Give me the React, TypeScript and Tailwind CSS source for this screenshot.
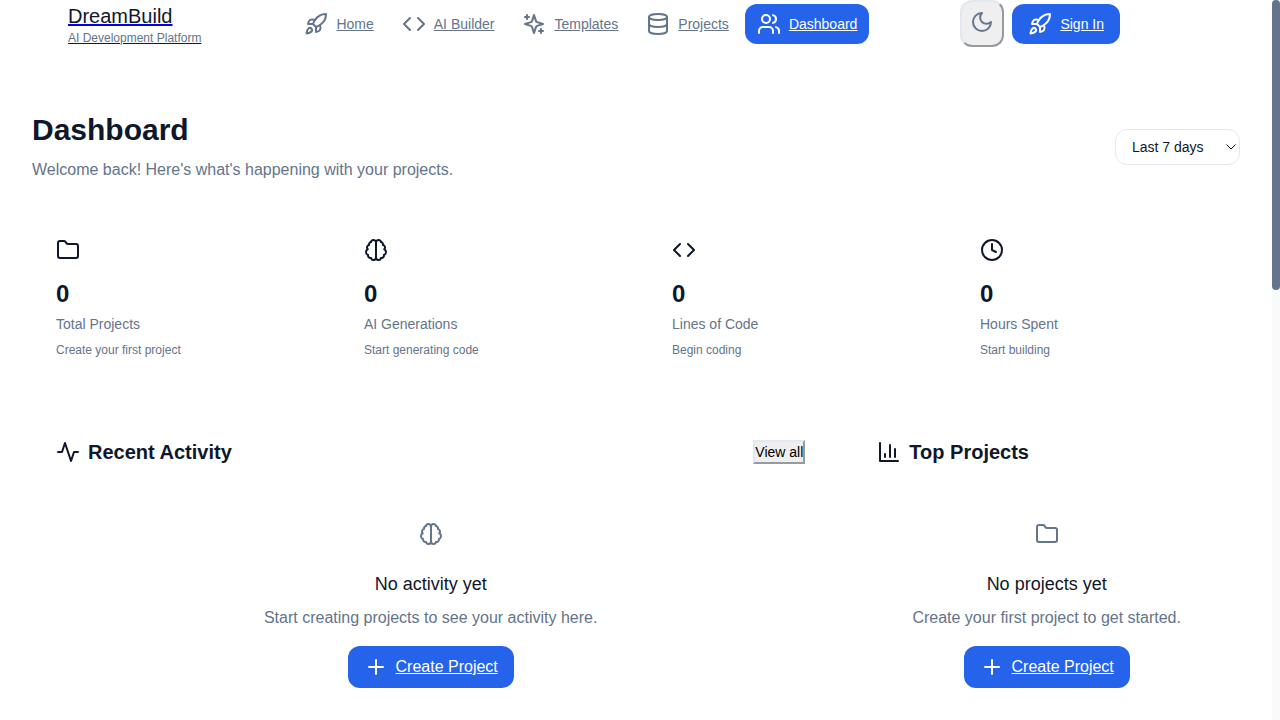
import type { ReactNode } from "react";

function Icon({ children, className = "" }: { children: ReactNode; className?: string }) {
  return (
    <svg
      aria-hidden="true"
      viewBox="0 0 24 24"
      fill="none"
      stroke="currentColor"
      strokeWidth="2"
      strokeLinecap="round"
      strokeLinejoin="round"
      className={`size-6 shrink-0 ${className}`}
    >
      {children}
    </svg>
  );
}

const rocket = (
  <>
    <path d="M4.5 16.5c-1.5 1.26-2 5-2 5s3.74-.5 5-2c.71-.84.7-2.13-.09-2.91a2.18 2.18 0 0 0-2.91-.09z" />
    <path d="m12 15-3-3a22 22 0 0 1 2-3.95A12.88 12.88 0 0 1 22 2c0 2.72-.78 7.5-6 11a22.35 22.35 0 0 1-4 2z" />
    <path d="M9 12H4s.55-3.03 2-4c1.62-1.08 5 0 5 0" />
    <path d="M12 15v5s3.03-.55 4-2c1.08-1.62 0-5 0-5" />
  </>
);

const code = (
  <>
    <polyline points="16 18 22 12 16 6" />
    <polyline points="8 6 2 12 8 18" />
  </>
);

const sparkles = (
  <>
    <path d="m12 3-1.912 5.813a2 2 0 0 1-1.275 1.275L3 12l5.813 1.912a2 2 0 0 1 1.275 1.275L12 21l1.912-5.813a2 2 0 0 1 1.275-1.275L21 12l-5.813-1.912a2 2 0 0 1-1.275-1.275L12 3Z" />
    <path d="M5 3v4" />
    <path d="M19 17v4" />
    <path d="M3 5h4" />
    <path d="M17 19h4" />
  </>
);

const database = (
  <>
    <ellipse cx="12" cy="5" rx="9" ry="3" />
    <path d="M3 5v14a9 3 0 0 0 18 0V5" />
    <path d="M3 12a9 3 0 0 0 18 0" />
  </>
);

const users = (
  <>
    <path d="M16 21v-2a4 4 0 0 0-4-4H6a4 4 0 0 0-4 4v2" />
    <circle cx="9" cy="7" r="4" />
    <path d="M22 21v-2a4 4 0 0 0-3-3.87" />
    <path d="M16 3.13a4 4 0 0 1 0 7.75" />
  </>
);

const moon = <path d="M12 3a6 6 0 0 0 9 9 9 9 0 1 1-9-9Z" />;

const folder = (
  <path d="M4 20h16a2 2 0 0 0 2-2V8a2 2 0 0 0-2-2h-7.93a2 2 0 0 1-1.66-.9l-.82-1.2A2 2 0 0 0 7.93 3H4a2 2 0 0 0-2 2v13c0 1.1.9 2 2 2Z" />
);

const brain = (
  <>
    <path d="M9.5 2A2.5 2.5 0 0 1 12 4.5v15a2.5 2.5 0 0 1-4.96.44 2.5 2.5 0 0 1-2.96-3.08 3 3 0 0 1-.34-5.58 2.5 2.5 0 0 1 1.32-4.24 2.5 2.5 0 0 1 1.98-3A2.5 2.5 0 0 1 9.5 2Z" />
    <path d="M14.5 2A2.5 2.5 0 0 0 12 4.5v15a2.5 2.5 0 0 0 4.96.44 2.5 2.5 0 0 0 2.96-3.08 3 3 0 0 0 .34-5.58 2.5 2.5 0 0 0-1.32-4.24 2.5 2.5 0 0 0-1.98-3A2.5 2.5 0 0 0 14.5 2Z" />
  </>
);

const clock = (
  <>
    <circle cx="12" cy="12" r="10" />
    <polyline points="12 6 12 12 16 14" />
  </>
);

const activity = <path d="M22 12h-4l-3 9L9 3l-3 9H2" />;

const barChart = (
  <>
    <path d="M3 3v18h18" />
    <path d="M18 17V9" />
    <path d="M13 17V5" />
    <path d="M8 17v-3" />
  </>
);

const plus = (
  <>
    <path d="M5 12h14" />
    <path d="M12 5v14" />
  </>
);

const navItems = [
  { label: "Home", icon: rocket },
  { label: "AI Builder", icon: code },
  { label: "Templates", icon: sparkles },
  { label: "Projects", icon: database },
  { label: "Dashboard", icon: users, active: true },
];

const stats = [
  { label: "Total Projects", hint: "Create your first project", icon: folder },
  { label: "AI Generations", hint: "Start generating code", icon: brain },
  { label: "Lines of Code", hint: "Begin coding", icon: code },
  { label: "Hours Spent", hint: "Start building", icon: clock },
];

function Header() {
  return (
    <header className="flex h-12 items-center justify-between pl-[68px] pr-[152px]">
      <a href="#" className="flex flex-col">
        <span className="text-xl leading-7 underline decoration-[#0000ee]">DreamBuild</span>
        <span className="text-xs leading-4 text-[#64748b] underline decoration-[#0000ee]">
          AI Development Platform
        </span>
      </a>
      <nav className="flex items-center gap-1">
        {navItems.map((item) => (
          <a
            key={item.label}
            href="#"
            className={`flex h-10 items-center gap-2 rounded-xl px-3 text-sm underline ${
              item.active ? "bg-[#2563eb] text-white" : "text-[#64748b]"
            }`}
          >
            <Icon>{item.icon}</Icon>
            {item.label}
          </a>
        ))}
      </nav>
      <div className="flex h-full items-center gap-2">
        <button
          type="button"
          aria-label="Toggle dark mode"
          className="flex h-[47px] items-start self-start rounded-xl border-2 border-t-[#e2e8f0] border-r-[#979a9f] border-b-[#979a9f] border-l-[#e2e8f0] bg-[#efefef] p-2 text-[#64748b]"
        >
          <Icon>{moon}</Icon>
        </button>
        <a
          href="#"
          className="flex h-10 items-center gap-2 rounded-xl bg-[#2563eb] px-4 text-sm text-white underline"
        >
          <Icon>{rocket}</Icon>
          Sign In
        </a>
      </div>
    </header>
  );
}

function RangeSelect() {
  return (
    <div className="relative">
      <select
        aria-label="Time range"
        className="h-9 w-[125px] appearance-none rounded-xl border border-[#e2e8f0] bg-white pl-4 text-sm"
      >
        <option>Last 7 days</option>
        <option>Last 30 days</option>
        <option>Last 90 days</option>
      </select>
      <svg
        aria-hidden="true"
        viewBox="0 0 10 6"
        fill="none"
        stroke="currentColor"
        className="pointer-events-none absolute inset-y-0 right-1 my-auto h-1.5 w-2.5"
      >
        <path d="M0.5 0.5 5 5 9.5 0.5" />
      </svg>
    </div>
  );
}

function EmptyState({ icon, title, text }: { icon: ReactNode; title: string; text: string }) {
  return (
    <div className="flex flex-col items-center py-8 text-center">
      <Icon className="text-[#64748b]">{icon}</Icon>
      <h3 className="mt-6 text-lg leading-7">{title}</h3>
      <p className="mt-2 text-base text-[#64748b]">{text}</p>
      <a
        href="#"
        className="mt-4 flex h-[42px] items-center gap-2 rounded-xl bg-[#2563eb] px-4 text-base text-white underline"
      >
        <Icon>{plus}</Icon>
        Create Project
      </a>
    </div>
  );
}

export default function App() {
  return (
    <div className="flex min-h-screen bg-white font-['Liberation_Sans',Arial,sans-serif] text-[#0f172a]">
      <div className="min-w-0 flex-1">
        <Header />
        <main className="px-8 pt-16">
          <div className="flex items-center justify-between">
            <div>
              <h1 className="text-3xl leading-9 font-bold">Dashboard</h1>
              <p className="mt-2.5 text-base text-[#64748b]">
                Welcome back! Here's what's happening with your projects.
              </p>
            </div>
            <RangeSelect />
          </div>

          <section aria-label="Statistics" className="mt-8 grid grid-cols-4 gap-6">
            {stats.map((stat) => (
              <div key={stat.label} className="p-6">
                <Icon>{stat.icon}</Icon>
                <p className="mt-4 text-2xl leading-8 font-bold">0</p>
                <p className="mt-1 text-sm text-[#64748b]">{stat.label}</p>
                <p className="mt-2 text-xs text-[#64748b]">{stat.hint}</p>
              </div>
            ))}
          </section>

          <div className="mt-8 grid grid-cols-3 gap-6">
            <section className="col-span-2 p-6">
              <div className="flex items-center justify-between">
                <h2 className="flex items-center gap-2 text-xl leading-7 font-bold">
                  <Icon>{activity}</Icon>
                  Recent Activity
                </h2>
                <button
                  type="button"
                  className="border-2 border-t-[#e2e8f0] border-r-[#979a9f] border-b-[#979a9f] border-l-[#e2e8f0] bg-[#efefef] text-sm text-black"
                >
                  View all
                </button>
              </div>
              <div className="mt-6">
                <EmptyState
                  icon={brain}
                  title="No activity yet"
                  text="Start creating projects to see your activity here."
                />
              </div>
            </section>
            <section className="p-6">
              <h2 className="flex items-center gap-2 text-xl leading-7 font-bold">
                <Icon>{barChart}</Icon>
                Top Projects
              </h2>
              <div className="mt-6">
                <EmptyState icon={folder} title="No projects yet" text="Create your first project to get started." />
              </div>
            </section>
          </div>
        </main>
      </div>
      <div aria-hidden="true" className="w-2 bg-[#f8fafc]">
        <div className="h-[290px] rounded bg-[#64748b]" />
      </div>
    </div>
  );
}
